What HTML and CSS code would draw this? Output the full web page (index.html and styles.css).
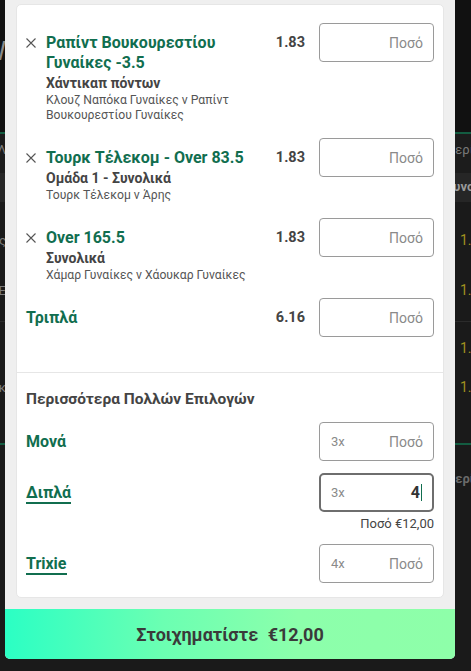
FILE: index.html
```html
<!DOCTYPE html>
<html lang="el">
<head>
<meta charset="utf-8">
<title>Δελτίο</title>
<link rel="stylesheet" href="styles.css">
</head>
<body>
<div class="backdrop">
  <div class="bg-top">
    <div class="bg-line"><span class="bg-l bg-big">ΝΕΑ W</span><span class="bg-r"></span></div>
  </div>
  <div class="bg-tabs">
    <div class="bg-line"><span class="bg-l">Συνολικά (Λ</span><span class="bg-r"><span class="bg-peek">Περίοδος</span></span></div>
  </div>
  <div class="bg-head">
    <div class="bg-line"><span class="bg-l"></span><span class="bg-r"><span class="bg-peek">Συνολικό</span></span></div>
  </div>
  <div class="bg-group bg-group-a">
    <div class="bg-line bg-row"><span class="bg-l">Ομάδες</span><span class="bg-r odd">1.83</span></div>
    <div class="bg-line bg-row"><span class="bg-l">Σύνολο Ε</span><span class="bg-r odd">1.83</span></div>
  </div>
  <div class="bg-group bg-group-b">
    <div class="bg-line bg-row"><span class="bg-l"></span><span class="bg-r odd">1.83</span></div>
    <div class="bg-line bg-row"><span class="bg-l">Αγωνιστικ</span><span class="bg-r odd">1.83</span></div>
  </div>
  <div class="bg-foot">
    <div class="bg-line"><span class="bg-l"></span><span class="bg-r"><span class="bg-peek">Περίοδος</span></span></div>
  </div>
</div>

<div class="modal">
  <div class="card">
    <div class="singles">
      <div class="sel">
        <svg class="remove" viewBox="0 0 10 10" width="10" height="10"><path d="M0.5 0.5L9.5 9.5M9.5 0.5L0.5 9.5"/></svg>
        <div class="sel-text">
          <div class="sel-title">Ραπίντ Βουκουρεστίου Γυναίκες -3.5</div>
          <div class="sel-market">Χάντικαπ πόντων</div>
          <div class="sel-event">Κλουζ Ναπόκα Γυναίκες ν Ραπίντ Βουκουρεστίου Γυναίκες</div>
        </div>
        <div class="odds">1.83</div>
        <div class="stake"><span class="ph">Ποσό</span></div>
      </div>
      <div class="sel">
        <svg class="remove" viewBox="0 0 10 10" width="10" height="10"><path d="M0.5 0.5L9.5 9.5M9.5 0.5L0.5 9.5"/></svg>
        <div class="sel-text">
          <div class="sel-title">Τουρκ Τέλεκομ - Over 83.5</div>
          <div class="sel-market">Ομάδα 1 - Συνολικά</div>
          <div class="sel-event">Τουρκ Τέλεκομ ν Άρης</div>
        </div>
        <div class="odds">1.83</div>
        <div class="stake"><span class="ph">Ποσό</span></div>
      </div>
      <div class="sel">
        <svg class="remove" viewBox="0 0 10 10" width="10" height="10"><path d="M0.5 0.5L9.5 9.5M9.5 0.5L0.5 9.5"/></svg>
        <div class="sel-text">
          <div class="sel-title">Over 165.5</div>
          <div class="sel-market">Συνολικά</div>
          <div class="sel-event">Χάμαρ Γυναίκες ν Χάουκαρ Γυναίκες</div>
        </div>
        <div class="odds">1.83</div>
        <div class="stake"><span class="ph">Ποσό</span></div>
      </div>
      <div class="combo">
        <div class="combo-name">Τριπλά</div>
        <div class="odds">6.16</div>
        <div class="stake"><span class="ph">Ποσό</span></div>
      </div>
    </div>

    <div class="multiples">
      <div class="multi-head">Περισσότερα Πολλών Επιλογών</div>
      <div class="multi-list">
        <div class="multi">
          <div class="multi-name">Μονά</div>
          <div class="stake"><span class="mult">3x</span><span class="ph">Ποσό</span></div>
        </div>
        <div class="multi-block">
          <div class="multi">
            <div class="multi-name link">Διπλά</div>
            <div class="stake active"><span class="mult">3x</span><span class="val">4</span><span class="caret"></span></div>
          </div>
          <div class="multi-total">Ποσό €12,00</div>
        </div>
        <div class="multi">
          <div class="multi-name link">Trixie</div>
          <div class="stake"><span class="mult">4x</span><span class="ph">Ποσό</span></div>
        </div>
      </div>
    </div>
  </div>
  <button class="place">Στοιχηματίστε <span class="place-amt">€12,00</span></button>
</div>
</body>
</html>
```

FILE: styles.css
```css
* { box-sizing: border-box; }

html, body {
  margin: 0;
  padding: 0;
  width: 471px;
  height: 671px;
  overflow: hidden;
  background: #1a1a1a;
  font-family: "Roboto", "Noto Sans", "Liberation Sans", sans-serif;
}

body { position: relative; }

/* ---------- dimmed page behind the slip ---------- */
.backdrop {
  display: flex;
  flex-direction: column;
  width: 471px;
  height: 671px;
  color: #7a7a7a;
  font-size: 13px;
}

.bg-line {
  display: flex;
  justify-content: space-between;
  align-items: center;
  white-space: nowrap;
}

.bg-l {
  width: 6px;
  overflow: hidden;
  display: flex;
  justify-content: flex-end;
}

.bg-r {
  width: 11px;
  overflow: visible;
}

.bg-peek {
  display: inline-block;
  margin-left: -14px;
}

.bg-top {
  height: 134px;
  background: #111;
  border-bottom: 2px solid #135c41;
  padding-top: 36px;
}

.bg-big {
  font-size: 26px;
  color: #8a8a8a;
}

.bg-tabs {
  height: 39px;
  background: #1c1c1c;
  padding-top: 8px;
}

.bg-head {
  height: 29px;
  background: #262626;
  color: #9a9a9a;
  font-weight: 700;
  padding-top: 6px;
}

.bg-group {
  display: flex;
  flex-direction: column;
}

.bg-group-a {
  gap: 28px;
  padding: 27px 0 20px;
  border-bottom: 1px solid #2b2b2b;
}

.bg-group-b {
  gap: 17px;
  padding: 15px 0 45px;
  border-bottom: 2px solid #135c41;
}

.bg-row { height: 22px; }

.odd {
  color: #a0911f;
  font-size: 14px;
}

.bg-foot {
  padding-top: 26px;
  color: #6a6a6a;
  font-weight: 700;
}

/* ---------- bet slip ---------- */
.modal {
  position: absolute;
  left: 5px;
  top: -7px;
  width: 450px;
  background: #efefef;
  padding: 11px 11px 0;
  border-radius: 0 0 5px 5px;
  display: flex;
  flex-direction: column;
}

.card {
  background: #fff;
  border: 1px solid #e6e6e6;
  border-radius: 5px;
  margin-bottom: 11px;
}

.singles {
  display: flex;
  flex-direction: column;
  gap: 15px;
  padding: 18px 9px 35px;
}

.sel {
  display: flex;
  align-items: flex-start;
}

.remove {
  flex: none;
  margin-top: 15px;
  margin-right: 10px;
  fill: none;
  stroke: #555;
  stroke-width: 1.1;
}

.sel-text {
  flex: 1;
  min-width: 0;
  padding-top: 10px;
  padding-right: 4px;
}

.sel-title {
  color: #116e4f;
  font-size: 16px;
  font-weight: 700;
  line-height: 20px;
}

.sel-market {
  color: #444;
  font-size: 14px;
  font-weight: 700;
  line-height: 20px;
}

.sel-event {
  color: #555;
  font-size: 12.2px;
  line-height: 15px;
}

.odds {
  flex: none;
  width: 36px;
  margin-right: 14px;
  text-align: right;
  color: #444;
  font-size: 14.5px;
  font-weight: 700;
  line-height: 20px;
}

.sel .odds { padding-top: 10px; }

.stake {
  flex: none;
  width: 115px;
  height: 39px;
  border: 1px solid #9a9a9a;
  border-radius: 4px;
  padding: 0 10px 0 11px;
  display: flex;
  align-items: center;
  justify-content: flex-end;
  font-size: 14px;
}

.ph { color: #8a8a8a; }

.mult {
  margin-right: auto;
  color: #8a8a8a;
  font-size: 13px;
}

.stake.active {
  border: 2px solid #6e6e6e;
  border-radius: 5px;
  padding: 0 10px 0 10px;
}

.val {
  color: #333;
  font-weight: 700;
  font-size: 16px;
}

.caret {
  width: 1px;
  height: 17px;
  margin-left: 1px;
  background: #116e4f;
}

.combo {
  display: flex;
  align-items: center;
}

.combo-name {
  flex: 1;
  color: #116e4f;
  font-size: 16px;
  font-weight: 700;
}

.multiples {
  border-top: 1px solid #e6e6e6;
  padding: 16px 9px 14px;
}

.multi-head {
  color: #444;
  font-size: 15.5px;
  font-weight: 700;
  line-height: 20px;
  margin-bottom: 13px;
}

.multi-list {
  display: flex;
  flex-direction: column;
  gap: 12px;
}

.multi {
  display: flex;
  align-items: center;
  justify-content: space-between;
}

.multi-name {
  color: #116e4f;
  font-size: 16px;
  font-weight: 700;
  line-height: 16px;
}

.multi-name.link {
  padding-bottom: 1px;
  border-bottom: 2px solid #116e4f;
  margin-top: 3px;
}

.multi-total {
  margin-top: 4px;
  text-align: right;
  color: #444;
  font-size: 13px;
  line-height: 16px;
}

.place {
  height: 50px;
  border: none;
  margin: 0 -11px;
  border-radius: 0 0 5px 5px;
  background: linear-gradient(90deg, #2bffc4 0%, #6bffb2 35%, #8cffab 65%, #8effa9 100%);
  color: #3a3a3a;
  font-family: inherit;
  font-size: 18px;
  font-weight: 700;
  cursor: pointer;
}

.place-amt { margin-left: 5px; }
```
